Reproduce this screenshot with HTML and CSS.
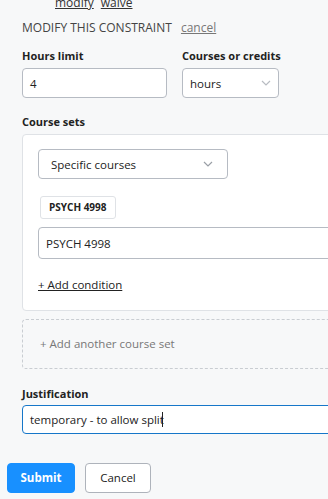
FILE: index.html
```html
<!DOCTYPE html>
<html lang="en">
<head>
  <meta charset="UTF-8">
  <meta name="viewport" content="width=device-width, initial-scale=1.0">
  <title>Modify constraint</title>
  <link rel="stylesheet" href="styles.css">
</head>
<body>
  <div id="root">
    <div class="actions">
      <a class="link" href="#">modify</a>
      <a class="link" href="#">waive</a>
    </div>

    <div class="constraint">
      <div class="title">MODIFY THIS CONSTRAINT <a class="cancel" href="#">cancel</a></div>

      <div class="row">
        <div class="field">
          <label class="label">Hours limit</label>
          <div class="input hours-input">4</div>
        </div>
        <div class="field">
          <label class="label">Courses or credits</label>
          <div class="input select unit-select">hours
            <svg class="chev" width="10" height="6" viewBox="0 0 10 6"><path d="M1 1l4 4 4-4" fill="none" stroke="#b8bcc2" stroke-width="1.2"/></svg>
          </div>
        </div>
      </div>

      <label class="label sets-label">Course sets</label>
      <div class="set-box">
        <div class="input select type-select">Specific courses
          <svg class="chev" width="10" height="6" viewBox="0 0 10 6"><path d="M1 1l4 4 4-4" fill="none" stroke="#9a9fa6" stroke-width="1.2"/></svg>
        </div>
        <div class="tags">
          <span class="tag">PSYCH 4998</span>
        </div>
        <div class="input course-input">PSYCH 4998</div>
        <a class="add-cond" href="#">+ Add condition</a>
      </div>

      <div class="add-set">+ Add another course set</div>

      <label class="label just-label">Justification</label>
      <div class="input just-input">temporary - to allow split<span class="caret"></span></div>
    </div>

    <div class="buttons">
      <div class="btn primary">Submit</div>
      <div class="btn">Cancel</div>
    </div>
  </div>
</body>
</html>
```

FILE: styles.css
```css
*{margin: 0; padding: 0; box-sizing: border-box;}

body{
  width: 328px;
  height: 499px;
  overflow: hidden;
  background-color: #f7f8f9;
  font-family: "Open Sans", "Noto Sans", sans-serif;
  font-size: 11.5px;
  color: #222;
}

#root{
  padding-left: 7px;
}

.actions{
  height: 10px;
  padding-left: 48px;
  line-height: 5px;
  display: flex;
  gap: 7px;
  font-size: 12px;
}

.link{
  color: #333;
  text-decoration: underline;
}

.constraint{
  width: 360px;
  padding-left: 15px;
}

.title{
  margin-top: 10px;
  line-height: 16px;
  font-size: 12px;
  color: #444;
}

.cancel{
  margin-left: 6px;
  color: #777;
  text-decoration: underline;
}

.row{
  display: flex;
  gap: 15px;
  margin-top: 12px;
}

.label{
  display: block;
  font-size: 11px;
  font-weight: 700;
  line-height: 16px;
  color: #222;
}

.input{
  height: 30px;
  margin-top: 4px;
  padding-left: 7px;
  display: flex;
  align-items: center;
  background-color: #fff;
  border: 1px solid #b6bbc3;
  border-radius: 4px;
}

.hours-input{
  width: 145px;
}

.unit-select{
  width: 97px;
  padding-right: 7px;
}

.select{
  justify-content: space-between;
}

.sets-label{
  margin-top: 16px;
}

.set-box{
  margin-top: 4px;
  padding: 14px 15px 17px 15px;
  background-color: #fff;
  border: 1px solid #dfe2e6;
  border-radius: 4px;
}

.type-select{
  width: 190px;
  margin-top: 0;
  padding-left: 12px;
  padding-right: 14px;
}

.tags{
  margin-top: 17px;
  padding-left: 2px;
}

.tag{
  display: inline-block;
  height: 23px;
  line-height: 21px;
  padding: 0 8px;
  font-size: 10px;
  font-weight: 700;
  border: 1px solid #dfe2e6;
  border-radius: 3px;
}

.course-input{
  height: 32px;
  margin-top: 8px;
}

.add-cond{
  display: inline-block;
  margin-top: 18px;
  line-height: 16px;
  color: #222;
  text-decoration: underline;
}

.add-set{
  height: 50px;
  margin-top: 8px;
  padding-left: 17px;
  line-height: 48px;
  color: #777;
  border: 1px dashed #c9cdd2;
  border-radius: 4px;
}

.just-label{
  margin-top: 17px;
}

.just-input{
  height: 29px;
  margin-top: 3px;
  border: 1px solid #1677c9;
}

.caret{
  width: 1px;
  height: 15px;
  margin-left: -2px;
  background-color: #222;
}

.buttons{
  display: flex;
  gap: 10px;
  margin-top: 29px;
}

.btn{
  height: 30px;
  width: 66px;
  line-height: 28px;
  text-align: center;
  background-color: #fff;
  border: 1px solid #aeb3bb;
  border-radius: 4px;
}

.btn.primary{
  width: 68px;
  color: #fff;
  font-weight: 700;
  background-color: #1890ff;
  border-color: #1890ff;
}
```
